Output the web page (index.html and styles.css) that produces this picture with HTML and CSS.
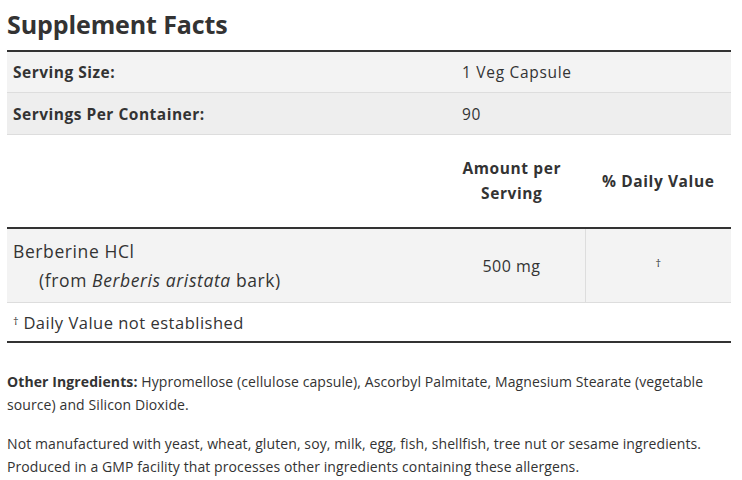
FILE: index.html
```html
<!DOCTYPE html>
<html lang="en">
<head>
  <meta charset="UTF-8" />
  <meta name="viewport" content="width=device-width, initial-scale=1.0" />
  <title>Supplement Facts</title>
  <link rel="stylesheet" href="styles.css">
</head>
<body>
  <div class="facts">
    <h2 class="facts-title">Supplement Facts</h2>

    <!-- serving info -->
    <table class="serving">
      <tr>
        <th>Serving Size:</th>
        <td>1 Veg Capsule</td>
      </tr>
      <tr class="alt">
        <th>Servings Per Container:</th>
        <td>90</td>
      </tr>
    </table>

    <!-- nutrients -->
    <table class="nutrients">
      <thead>
        <tr>
          <th class="name"></th>
          <th class="amount">Amount per<br>Serving</th>
          <th class="dv">% Daily Value</th>
        </tr>
      </thead>
      <tbody>
        <tr class="item">
          <td class="name">Berberine HCl<br><span class="sub">(from <em>Berberis aristata</em> bark)</span></td>
          <td class="amount">500 mg</td>
          <td class="dv"><span class="dagger">†</span></td>
        </tr>
        <tr class="note">
          <td colspan="3"><span class="dagger">†</span> Daily Value not established</td>
        </tr>
      </tbody>
    </table>

    <p class="other"><b>Other Ingredients:</b> Hypromellose (cellulose capsule), Ascorbyl Palmitate, Magnesium Stearate (vegetable source) and Silicon Dioxide.</p>
    <p class="other">Not manufactured with yeast, wheat, gluten, soy, milk, egg, fish, shellfish, tree nut or sesame ingredients. Produced in a GMP facility that processes other ingredients containing these allergens.</p>
  </div>
</body>
</html>
```

FILE: styles.css
```css
body { margin:0; padding:0; background:#fff; font-family:'Open Sans','Noto Sans',sans-serif; color:#333; }
.facts { padding:0 11px 0 7px; }
.facts-title { font-size:25px; font-weight:700; margin:0; height:50px; box-sizing:border-box; padding-top:7px; line-height:34px; color:#333; letter-spacing:-0.1px; }

table { width:100%; border-collapse:collapse; }

/* 서빙 정보 */
.serving { border-top:2px solid #333; }
.serving th, .serving td { text-align:left; font-size:15.5px; letter-spacing:0.5px; height:40px; padding:0 6px; border-bottom:1px solid #ddd; background:#f3f3f3; }
.serving tr.alt th, .serving tr.alt td { height:41px; background:#eee; }
.serving th { font-weight:700; width:437px; }
.serving td { letter-spacing:0.7px; }

/* 성분 */
.nutrients thead th { font-size:15.5px; letter-spacing:0.6px; font-weight:700; height:92px; vertical-align:middle; line-height:25px; padding:0; border-bottom:2px solid #333; }
.nutrients th.amount, .nutrients td.amount { width:145px; text-align:center; }
.nutrients th.dv, .nutrients td.dv { width:143px; text-align:center; }
.nutrients tr.item td { background:#f3f3f3; height:71px; border-bottom:1px solid #ddd; font-size:16px; letter-spacing:0.5px; }
.nutrients tr.item td.name { font-size:17.5px; letter-spacing:0.6px; line-height:29px; padding:0 6px; }
.nutrients tr.item td.dv { border-left:1px solid #ddd; }
.sub { padding-left:26px; }
.dagger { font-size:11px; vertical-align:top; }
.nutrients tr.note td { height:38px; font-size:16.5px; letter-spacing:0.5px; padding:0 6px; border-bottom:2px solid #333; }
.nutrients tr.note .dagger { vertical-align:4px; letter-spacing:0; }

.other { font-size:14px; letter-spacing:0.1px; line-height:22.5px; margin:0; }
.facts .other:first-of-type { margin-top:28px; }
.other + .other { margin-top:17px; }
```
